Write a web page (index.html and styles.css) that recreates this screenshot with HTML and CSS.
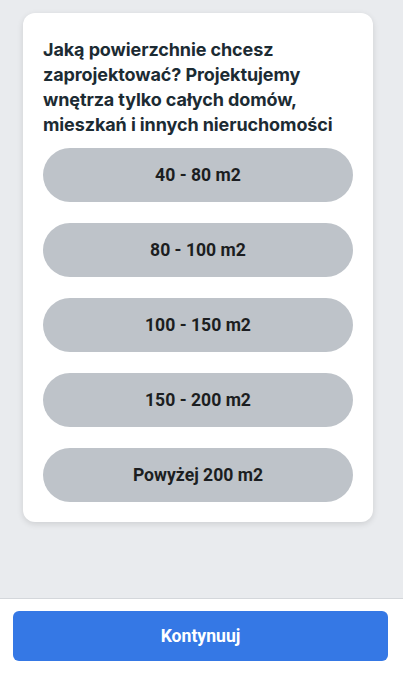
FILE: index.html
```html
<!DOCTYPE html>
<html lang="pl">
<head>
<meta charset="utf-8">
<title>Powierzchnia</title>
<link rel="stylesheet" href="styles.css">
</head>
<body>
<div class="page">
  <main class="content">
    <section class="card">
      <h1 class="question">Jaką powierzchnie chcesz zaprojektować? Projektujemy wnętrza tylko całych domów, mieszkań i innych nieruchomości</h1>
      <div class="options">
        <button class="option">40 - 80 m2</button>
        <button class="option">80 - 100 m2</button>
        <button class="option">100 - 150 m2</button>
        <button class="option">150 - 200 m2</button>
        <button class="option">Powyżej 200 m2</button>
      </div>
    </section>
  </main>
  <footer class="footer">
    <button class="continue">Kontynuuj</button>
  </footer>
</div>
</body>
</html>
```
FILE: styles.css
```css
html, body {
  margin: 0;
  padding: 0;
}
body {
  background: #e9ebee;
  font-family: Roboto, "Liberation Sans", sans-serif;
  color: #1c1e21;
}
.page {
  display: flex;
  flex-direction: column;
  height: 673px;
}
.content {
  flex: 1;
  padding: 13px 30px 0 23px;
}
.card {
  background: #fff;
  border-radius: 12px;
  box-shadow: 0 2px 6px rgba(0, 0, 0, 0.12);
  padding: 24px 20px 20px;
}
.question {
  margin: 0;
  font-family: Inter, "Open Sans", sans-serif;
  font-weight: 700;
  font-size: 18px;
  line-height: 25px;
  letter-spacing: -0.1px;
  color: #1c2b33;
}
.options {
  display: flex;
  flex-direction: column;
  gap: 21px;
  margin-top: 11px;
}
.option {
  height: 54px;
  border: none;
  border-radius: 27px;
  background: #bec3c9;
  font-family: Roboto, "Liberation Sans", sans-serif;
  font-weight: 700;
  font-size: 17.6px;
  color: #1c1e21;
  padding: 0;
}
.footer {
  height: 75px;
  background: #fff;
  border-top: 1px solid #d4d7db;
  padding: 12px 15px 0 13px;
  box-sizing: border-box;
}
.continue {
  width: 100%;
  height: 50px;
  border: none;
  border-radius: 6px;
  background: #3578e5;
  color: #fff;
  font-family: Roboto, "Liberation Sans", sans-serif;
  font-weight: 700;
  font-size: 17.6px;
}
```
